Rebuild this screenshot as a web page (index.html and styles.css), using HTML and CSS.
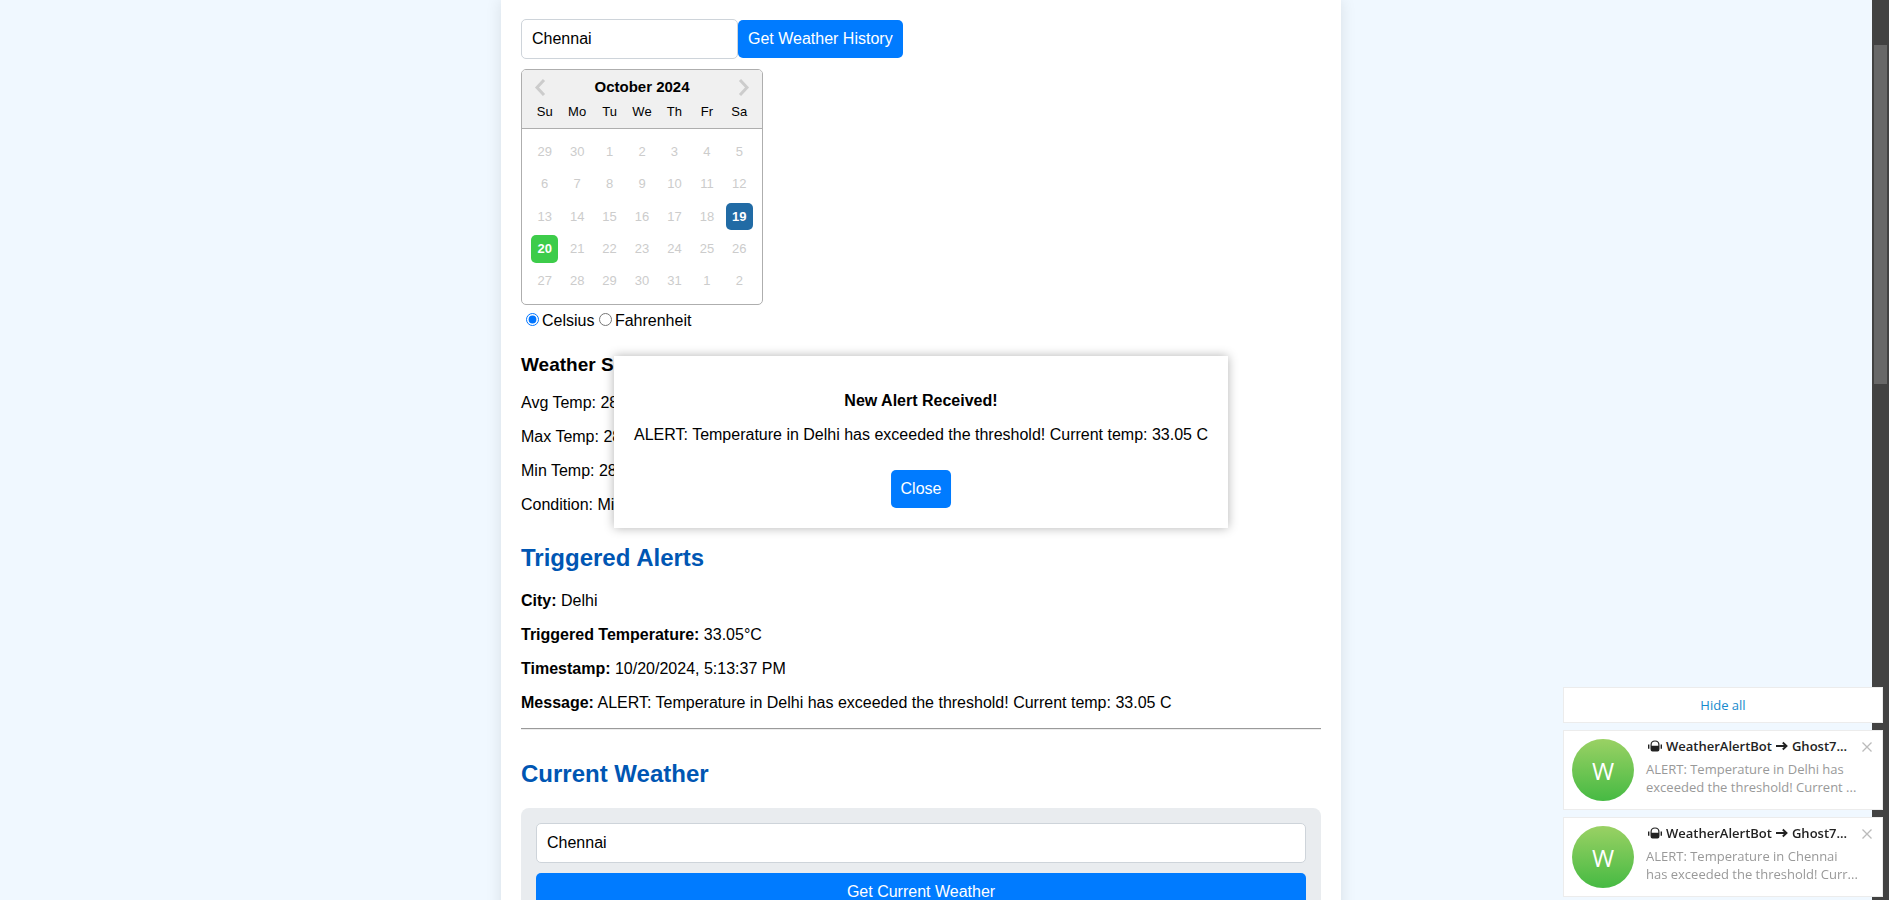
FILE: index.html
```html
<!DOCTYPE html>
<html lang="en">
<head>
<meta charset="utf-8">
<meta name="viewport" content="width=device-width, initial-scale=1">
<title>Weather Monitor</title>
<link rel="stylesheet" href="styles.css">
</head>
<body>
<svg class="sprite" aria-hidden="true">
  <symbol id="bot" viewBox="0 0 14 12">
    <path d="M2.500 9V5Q2.500 .5 7 .5T11.500 5V9Q11.500 11.500 9.500 11.500H4.500Q2.500 11.500 2.500 9Z" fill="#222"/>
    <path d="M3.700 5.800V4.800Q3.700 1.600 7 1.600T10.300 4.800V5.800Z" fill="#fff"/>
    <path d="M.7 4.500V8.700M13.300 4.500V8.700" stroke="#222" stroke-width="1.400"/>
  </symbol>
  <symbol id="arrow" viewBox="0 0 12 10">
    <path d="M0 5H10M6.800 1.500L10.500 5L6.800 8.500" fill="none" stroke="#222" stroke-width="1.900"/>
  </symbol>
  <symbol id="cross" viewBox="0 0 10 10">
    <path d="M.5 .5L9.500 9.500M9.500 .5L.5 9.500" fill="none" stroke="#bbb" stroke-width="1.300"/>
  </symbol>
</svg>
<div class="app">
  <div class="viewport">
    <main class="container">
      <form class="search">
        <input class="field search-field" type="text" value="Chennai" aria-label="City for weather history">
        <button class="btn" type="button">Get Weather History</button>
      </form>

      <section class="calendar" aria-label="Date picker">
        <header class="cal-head">
          <div class="cal-title">
            <button class="cal-nav" type="button" aria-label="Previous month"><svg width="12" height="18" viewBox="0 0 12 18"><path d="M10 2L3 9.500L10 17" fill="none" stroke="#ccc" stroke-width="3"/></svg></button>
            <strong>October 2024</strong>
            <button class="cal-nav" type="button" aria-label="Next month"><svg width="12" height="18" viewBox="0 0 12 18"><path d="M2 2L9 9.500L2 17" fill="none" stroke="#ccc" stroke-width="3"/></svg></button>
          </div>
          <div class="week">
            <span>Su</span><span>Mo</span><span>Tu</span><span>We</span><span>Th</span><span>Fr</span><span>Sa</span>
          </div>
        </header>
        <div class="days">
          <button class="day" type="button">29</button><button class="day" type="button">30</button><button class="day" type="button">1</button><button class="day" type="button">2</button><button class="day" type="button">3</button><button class="day" type="button">4</button><button class="day" type="button">5</button>
          <button class="day" type="button">6</button><button class="day" type="button">7</button><button class="day" type="button">8</button><button class="day" type="button">9</button><button class="day" type="button">10</button><button class="day" type="button">11</button><button class="day" type="button">12</button>
          <button class="day" type="button">13</button><button class="day" type="button">14</button><button class="day" type="button">15</button><button class="day" type="button">16</button><button class="day" type="button">17</button><button class="day" type="button">18</button><button class="day selected" type="button">19</button>
          <button class="day highlighted" type="button">20</button><button class="day" type="button">21</button><button class="day" type="button">22</button><button class="day" type="button">23</button><button class="day" type="button">24</button><button class="day" type="button">25</button><button class="day" type="button">26</button>
          <button class="day" type="button">27</button><button class="day" type="button">28</button><button class="day" type="button">29</button><button class="day" type="button">30</button><button class="day" type="button">31</button><button class="day" type="button">1</button><button class="day" type="button">2</button>
        </div>
      </section>

      <div class="units">
        <label><input type="radio" name="unit" checked>Celsius</label>
        <label><input type="radio" name="unit">Fahrenheit</label>
      </div>

      <section>
        <h3>Weather Summary</h3>
        <p>Avg Temp: 28</p>
        <p>Max Temp: 28</p>
        <p>Min Temp: 28</p>
        <p>Condition: Mist</p>
      </section>

      <section>
        <h2>Triggered Alerts</h2>
        <p><strong>City:</strong> Delhi</p>
        <p><strong>Triggered Temperature:</strong> 33.05°C</p>
        <p><strong>Timestamp:</strong> 10/20/2024, 5:13:37 PM</p>
        <p><strong>Message:</strong> ALERT: Temperature in Delhi has exceeded the threshold! Current temp: 33.05 C</p>
        <hr>
      </section>

      <section>
        <h2>Current Weather</h2>
        <form class="card">
          <input class="field" type="text" value="Chennai" aria-label="City for current weather">
          <button class="btn" type="button">Get Current Weather</button>
        </form>
      </section>
    </main>

    <div class="modal" role="dialog" aria-labelledby="modal-title">
      <h4 id="modal-title">New Alert Received!</h4>
      <p>ALERT: Temperature in Delhi has exceeded the threshold! Current temp: 33.05 C</p>
      <button class="btn" type="button">Close</button>
    </div>
  </div>
  <div class="track" aria-hidden="true"><div class="thumb"></div></div>
</div>

<aside class="toasts" aria-label="Notifications">
  <button class="hide-all" type="button">Hide all</button>
  <article class="toast">
    <div class="avatar">W</div>
    <div class="toast-body">
      <div class="toast-title"><svg class="bot"><use href="#bot"/></svg><span>WeatherAlertBot</span><svg class="arrow"><use href="#arrow"/></svg><span>Ghost7...</span></div>
      <div class="toast-text">ALERT: Temperature in Delhi has<br>exceeded the threshold! Current ...</div>
    </div>
    <button class="toast-close" type="button" aria-label="Close notification"><svg><use href="#cross"/></svg></button>
  </article>
  <article class="toast">
    <div class="avatar">W</div>
    <div class="toast-body">
      <div class="toast-title"><svg class="bot"><use href="#bot"/></svg><span>WeatherAlertBot</span><svg class="arrow"><use href="#arrow"/></svg><span>Ghost7...</span></div>
      <div class="toast-text">ALERT: Temperature in Chennai<br>has exceeded the threshold! Curr...</div>
    </div>
    <button class="toast-close" type="button" aria-label="Close notification"><svg><use href="#cross"/></svg></button>
  </article>
</aside>
</body>
</html>
```
FILE: styles.css
```css
* { box-sizing: border-box; }

body {
  margin: 0;
  background: #f0f8ff;
  color: #000;
  font: 16px/18px "Liberation Sans", Arial, sans-serif;
  overflow: hidden;
}

button, input { font: inherit; margin: 0; }
button { cursor: pointer; }
.sprite { display: none; }

.app {
  display: grid;
  grid-template-columns: 1fr 17px;
  height: 100vh;
}

.viewport {
  position: relative;
  overflow: hidden;
  margin-right: 30px;
}

.container {
  max-width: 840px;
  min-height: 100vh;
  margin: 0 auto;
  padding: 19px 20px 20px;
  background: #fff;
  box-shadow: 0 0 15px rgba(0, 0, 0, 0.1);
}

.field {
  padding: 10px;
  height: 40px;
  border: 1px solid #ced4da;
  border-radius: 5px;
  background: #fff;
  color: #000;
}

.btn {
  padding: 10px;
  border: 0;
  border-radius: 5px;
  background: #007bff;
  color: #fff;
}

.search { display: flex; align-items: center; margin-bottom: 10px; }
.search-field { width: 217px; }

.calendar {
  width: 242px;
  border: 1px solid #aeaeae;
  border-radius: 5px;
  overflow: hidden;
}
.cal-head {
  padding: 8px 9px 7px;
  background: #f0f0f0;
  border-bottom: 1px solid #aeaeae;
}
.cal-title {
  display: flex;
  justify-content: space-between;
  align-items: center;
  padding: 0 3px;
  font-size: 15px;
}
.cal-nav {
  display: flex;
  padding: 0;
  border: 0;
  background: none;
}
.week, .days {
  display: grid;
  grid-template-columns: repeat(7, 1fr);
  column-gap: 5px;
  text-align: center;
  font-size: 13px;
}
.week { margin-top: 7px; }
.days { row-gap: 5px; padding: 9px; }
.day {
  aspect-ratio: 1;
  padding: 0;
  border: 0;
  border-radius: 5px;
  background: none;
  color: #ccc;
}
.day.selected { background: #216ba5; color: #fff; font-weight: bold; }
.day.highlighted { background: #3dcc4a; color: #fff; font-weight: bold; }

.units { margin: 5px 0 24px; }
.units input { margin: 3px 3px 0 5px; }
.units label + label input { margin-left: 0; }

h3 { margin: 0 0 18px; font-size: 19px; line-height: 22px; }
h2 { margin: 30px 0 20px; font-size: 24px; line-height: 28px; color: #0056b3; }
p { margin: 16px 0; }
hr {
  margin: 0;
  border: 0;
  border-top: 1px solid #9a9a9a;
  border-bottom: 1px solid #ededed;
}

.card {
  display: flex;
  flex-direction: column;
  gap: 10px;
  padding: 15px;
  border-radius: 8px;
  background: #e9ecef;
}

.modal {
  position: absolute;
  top: 356px;
  left: 50%;
  transform: translateX(-50%);
  padding: 20px;
  background: #fff;
  box-shadow: 0 0 10px rgba(0, 0, 0, 0.3);
  text-align: center;
  white-space: nowrap;
}
.modal h4 { margin: 16px 0; font-size: 16px; }
.modal p { margin: 0 0 26px; }

.track { padding: 45px 2px 0; background: #424242; }
.thumb { height: 339px; background: #686868; }

.toasts {
  position: fixed;
  right: 6px;
  bottom: 3px;
  width: 320px;
  display: flex;
  flex-direction: column;
  gap: 7px;
  font: 13px/18px "Open Sans", "Noto Sans", sans-serif;
}
.hide-all {
  height: 36px;
  border: 1px solid #ececec;
  background: #fff;
  color: #168acd;
}
.toast {
  display: flex;
  height: 80px;
  padding: 8px;
  border: 1px solid #ececec;
  background: #fff;
}
.avatar {
  flex: none;
  width: 62px;
  height: 62px;
  border-radius: 50%;
  background: linear-gradient(#9ad164, #46ba43);
  color: #fff;
  font-size: 24px;
  font-weight: 500;
  line-height: 64px;
  text-align: center;
}
.toast-body { flex: 1; padding-left: 12px; white-space: nowrap; }
.toast-title {
  display: flex;
  align-items: center;
  gap: 4px;
  margin: -2px 0 5px 2px;
  font-weight: 600;
  color: #222;
}
.bot { width: 14px; height: 12px; }
.arrow { width: 12px; height: 10px; }
.toast-text { color: #999; }
.toast-close {
  align-self: flex-start;
  display: flex;
  margin: 3px 2px 0 0;
  padding: 0;
  border: 0;
  background: none;
}
.toast-close svg { width: 10px; height: 10px; }
```
